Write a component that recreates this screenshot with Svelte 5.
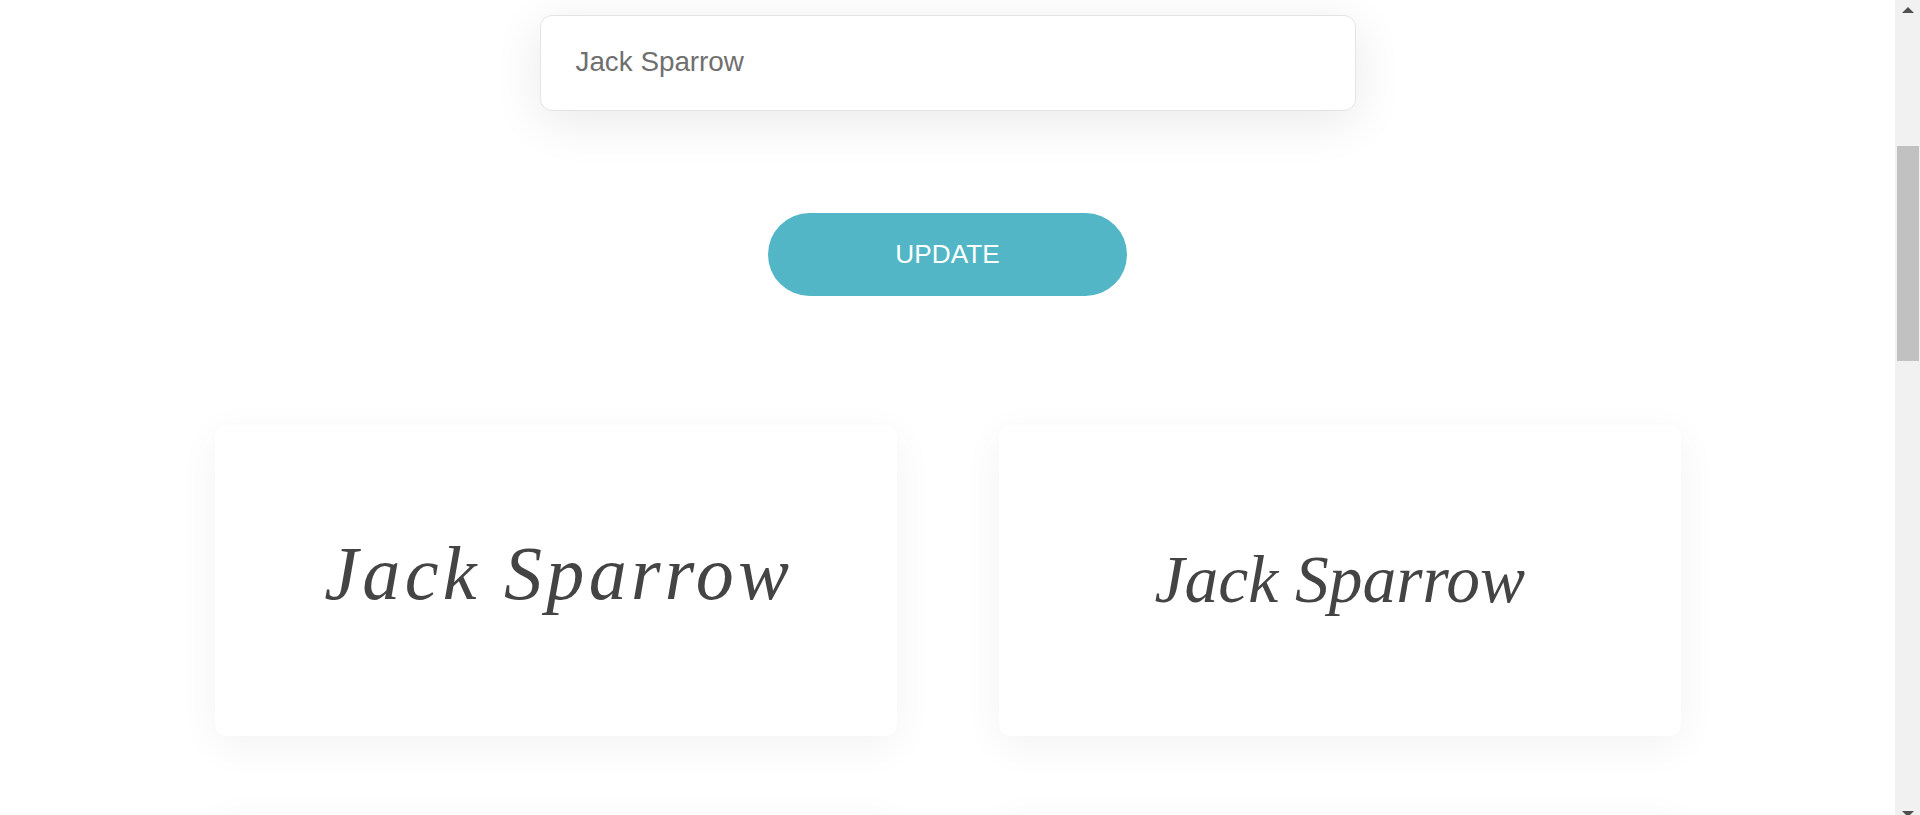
<script>
  const value = 'Jack Sparrow';
</script>

<div class="page">
  <div class="field"><span class="value">{value}</span></div>
  <div class="action"><button class="update" type="button">UPDATE</button></div>
  <div class="grid">
    <div class="card"><span class="sig one">{value}</span></div>
    <div class="card"><span class="sig two">{value}</span></div>
    <div class="card"></div>
    <div class="card"></div>
  </div>
</div>

<div class="scrollbar" aria-hidden="true">
  <span class="arrow up"></span>
  <span class="thumb"></span>
  <span class="arrow down"></span>
</div>

<style>
  :global(html), :global(body) {
    margin: 0;
    height: 815px;
    overflow: hidden;
    background: #fff;
  }
  .page {
    box-sizing: border-box;
    width: 1895px;
    height: 815px;
    overflow: hidden;
    padding-top: 14.5px;
    font-family: "Liberation Sans", Arial, sans-serif;
    display: flex;
    flex-direction: column;
    align-items: center;
  }
  .field {
    box-sizing: border-box;
    width: 816px;
    height: 96px;
    padding: 0 35px 2px;
    display: flex;
    align-items: center;
    background: #fff;
    border: 1px solid #e4e4e4;
    border-radius: 12px;
    box-shadow: 0 10px 50px rgba(0, 0, 0, 0.09);
    flex: none;
  }
  .value {
    font-size: 27.8px;
    color: #6f6f6f;
  }
  .action {
    margin-top: 102.5px;
    flex: none;
  }
  .update {
    display: block;
    width: 359px;
    height: 83px;
    border: 0;
    padding: 0;
    border-radius: 42px;
    background: #52b6c6;
    color: #fff;
    font: 26.2px "Liberation Sans", Arial, sans-serif;
  }
  .grid {
    margin-top: 129px;
    margin-left: 1px;
    display: grid;
    grid-template-columns: 682px 682px;
    grid-auto-rows: 311px;
    column-gap: 101.5px;
    row-gap: 78px;
    flex: none;
  }
  .card {
    background: #fff;
    border-radius: 12px;
    box-shadow: 0 10px 40px rgba(0, 0, 0, 0.05);
    display: flex;
    align-items: center;
    justify-content: center;
  }
  .sig {
    color: #444;
    white-space: nowrap;
    font-family: "Liberation Serif", serif;
    font-style: italic;
  }
  .one {
    font-size: 76px;
    letter-spacing: 4.3px;
    margin: 0 0 14px 5px;
  }
  .two {
    font-size: 67.5px;
    margin-bottom: 2px;
  }
  .scrollbar {
    position: fixed;
    top: 0;
    right: 0;
    bottom: 0;
    width: 25px;
    background: #f1f1f1;
  }
  .thumb {
    position: absolute;
    top: 146px;
    left: 2px;
    width: 22px;
    height: 215px;
    background: #c1c1c1;
  }
  .arrow {
    position: absolute;
    left: 7px;
    width: 0;
    height: 0;
    border-left: 6px solid transparent;
    border-right: 6px solid transparent;
  }
  .up {
    top: 7px;
    border-bottom: 6px solid #505050;
  }
  .down {
    top: 811px;
    border-top: 6px solid #505050;
  }
</style>
